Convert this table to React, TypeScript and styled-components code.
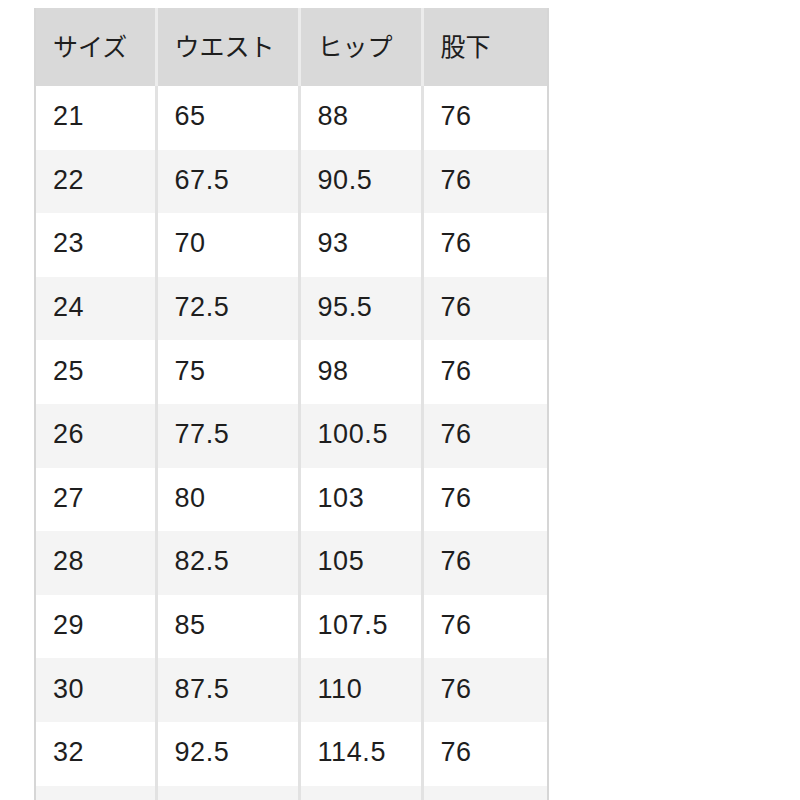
import styled, { createGlobalStyle } from "styled-components";

const GlobalStyle = createGlobalStyle`
  html, body {
    margin: 0;
    background: #ffffff;
  }
`;

const columns = [
  { label: "サイズ", width: 121 },
  { label: "ウエスト", width: 143 },
  { label: "ヒップ", width: 123 },
  { label: "股下", width: 126 },
];

// the last row only peeks in at the bottom edge, so its cells stay empty
const rows: string[][] = [
  ["21", "65", "88", "76"],
  ["22", "67.5", "90.5", "76"],
  ["23", "70", "93", "76"],
  ["24", "72.5", "95.5", "76"],
  ["25", "75", "98", "76"],
  ["26", "77.5", "100.5", "76"],
  ["27", "80", "103", "76"],
  ["28", "82.5", "105", "76"],
  ["29", "85", "107.5", "76"],
  ["30", "87.5", "110", "76"],
  ["32", "92.5", "114.5", "76"],
  ["", "", "", ""],
];

export default function App() {
  return (
    <>
      <GlobalStyle />
      <Page>
        <SizeTable>
          <colgroup>
            {columns.map((c) => (
              <col key={c.label} style={{ width: c.width }} />
            ))}
          </colgroup>
          <thead>
            <tr>
              {columns.map((c) => (
                <HeadCell key={c.label}>{c.label}</HeadCell>
              ))}
            </tr>
          </thead>
          <tbody>
            {rows.map((row, i) => (
              <BodyRow key={i} $striped={i % 2 === 1}>
                {row.map((v, j) => (
                  <BodyCell key={j}>{v}</BodyCell>
                ))}
              </BodyRow>
            ))}
          </tbody>
        </SizeTable>
      </Page>
    </>
  );
}

const Page = styled.div`
  height: 800px;
  overflow: hidden;
  padding: 8px 0 0 34px;
  box-sizing: border-box;
  font-family: "Liberation Sans", "Noto Sans CJK JP", sans-serif;
  color: #1e1e1e;
`;

const SizeTable = styled.table`
  width: 513px;
  table-layout: fixed;
  border-collapse: collapse;
  border-left: 2px solid #d6d6d6;
  border-right: 2px solid #d6d6d6;
`;

const HeadCell = styled.th`
  height: 78px;
  padding: 0 0 4px 17px;
  box-sizing: border-box;
  text-align: left;
  vertical-align: middle;
  font-weight: 400;
  font-size: 25px;
  background: #d9d9d9;
  border-right: 3px solid #ececec;

  &:last-child {
    border-right: none;
  }
`;

const BodyRow = styled.tr<{ $striped: boolean }>`
  background: ${({ $striped }) => ($striped ? "#f4f4f4" : "#ffffff")};
`;

const BodyCell = styled.td`
  height: 63.6px;
  padding: 0 0 2px 17px;
  box-sizing: border-box;
  vertical-align: middle;
  font-size: 27px;
  letter-spacing: 0.6px;
  border-right: 3px solid #e2e2e2;

  &:last-child {
    border-right: none;
  }
`;
